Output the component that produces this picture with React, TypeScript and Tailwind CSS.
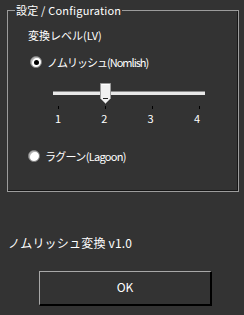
import React from "react";

function Radio({ checked }: { checked: boolean }) {
  return (
    <div className="w-[12px] h-[12px] rounded-full bg-white border border-[#7a7a7a] shadow-[inset_1px_1px_0_#b0b0b0] flex items-center justify-center shrink-0">
      {checked && <div className="w-[5px] h-[5px] rounded-full bg-black" />}
    </div>
  );
}

export default function App() {
  const font = { fontFamily: '"Noto Sans CJK JP", "Noto Sans", sans-serif' };
  return (
    <div className="w-[244px] h-[315px] bg-[#333333] text-white overflow-hidden" style={font}>
      <div className="pt-[10px] pl-[7px]">
        <div className="relative w-[232px] h-[182px] border border-[#9c9c9c] shadow-[inset_-1px_-1px_0_#161616]">
          <span className="absolute left-[7px] top-[-8px] bg-[#333333] px-[1px] text-[11px] leading-[14px] tracking-[0.2px]">
            設定 / Configuration
          </span>
          <div className="pl-[20px] pt-[17px] text-[11px] leading-[14px]">変換レベル(LV)</div>
          <div className="mt-[13px] pl-[22px] flex items-center gap-[5px] h-[14px] text-[11px] leading-[14px]">
            <Radio checked />
            <span className="tracking-[-1px]">ノムリッシュ(Nomlish)</span>
          </div>
          <div className="mt-[14px] ml-[45px] w-[152px]">
            <div className="relative h-[21px]">
              <div className="absolute left-0 right-0 top-[8px] h-[4px] bg-[#e8e8e8] border-t border-[#8a8a8a]" />
              <div className="absolute left-[47px] top-0 w-[11px] h-[21px]">
                <svg width="11" height="21" viewBox="0 0 11 21">
                  <path d="M0.5 0.5 H10.5 V15.5 L5.5 20.5 L0.5 15.5 Z" fill="#f0f0f0" stroke="#9a9a9a" />
                  <path d="M1.5 1.5 H9.5" stroke="#ffffff" />
                  <path d="M3 15.5 H8" stroke="#202020" />
                </svg>
              </div>
            </div>
            <div className="mt-[2px] px-[5px] flex justify-between h-[3px]">
              <div className="w-px h-[3px] bg-black" />
              <div className="w-px h-[3px] bg-black" />
              <div className="w-px h-[3px] bg-black" />
              <div className="w-px h-[3px] bg-black" />
            </div>
            <div className="mt-[2px] flex justify-between text-[11px] leading-[14px] pl-[2px] pr-[5px]">
              <span>1</span>
              <span>2</span>
              <span>3</span>
              <span>4</span>
            </div>
          </div>
          <div className="mt-[24px] pl-[20px] flex items-center gap-[5px] h-[14px] text-[11px] leading-[14px]">
            <Radio checked={false} />
            <span className="tracking-[-0.7px]">ラグーン(Lagoon)</span>
          </div>
        </div>
        <div className="mt-[44px] ml-[1px] text-[12px] leading-[14px] tracking-[0.2px]">ノムリッシュ変換 v1.0</div>
        <div className="mt-[21px] ml-[32px] w-[173px] h-[35px] border-t border-l border-[#a8a8a8] border-r-2 border-b-2 border-r-black border-b-black bg-[#333333] flex items-center justify-center text-[12px] leading-[14px] pb-[2px]">
          OK
        </div>
      </div>
    </div>
  );
}
